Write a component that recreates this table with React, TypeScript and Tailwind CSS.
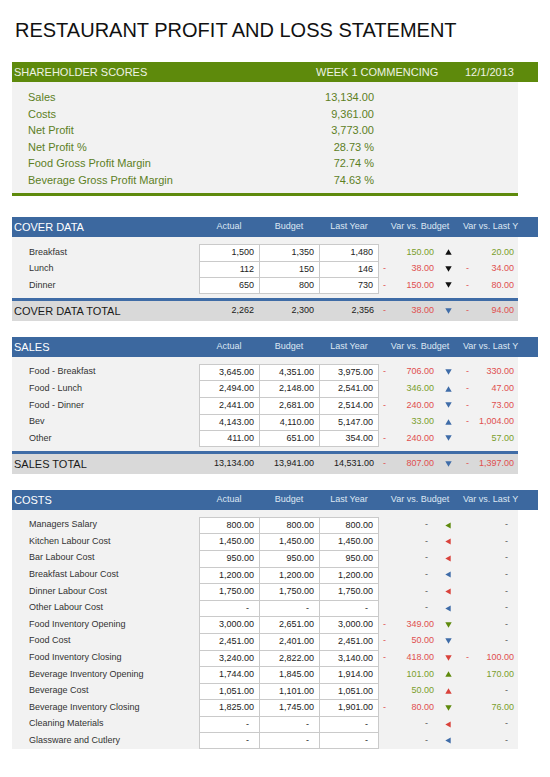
import React from "react";

type Tone = "k" | "b" | "r" | "g";
type Dir = "up" | "down" | "left";
type Row = [string, string, string, string, string, Dir, Tone, string];

const ARROW_TONE: Record<Tone, string> = {
  k: "text-[#111111]",
  b: "text-[#3f6ca8]",
  r: "text-[#d9423b]",
  g: "text-[#5e8a0c]",
};

const COVER: Row[] = [
  ["Breakfast", "1,500", "1,350", "1,480", "150.00", "up", "k", "20.00"],
  ["Lunch", "112", "150", "146", "-38.00", "down", "k", "-34.00"],
  ["Dinner", "650", "800", "730", "-150.00", "down", "k", "-80.00"],
];
const COVER_TOTAL: Row = ["COVER DATA TOTAL", "2,262", "2,300", "2,356", "-38.00", "down", "b", "-94.00"];

const SALES: Row[] = [
  ["Food - Breakfast", "3,645.00", "4,351.00", "3,975.00", "-706.00", "down", "b", "-330.00"],
  ["Food - Lunch", "2,494.00", "2,148.00", "2,541.00", "346.00", "up", "b", "-47.00"],
  ["Food - Dinner", "2,441.00", "2,681.00", "2,514.00", "-240.00", "down", "b", "-73.00"],
  ["Bev", "4,143.00", "4,110.00", "5,147.00", "33.00", "up", "b", "-1,004.00"],
  ["Other", "411.00", "651.00", "354.00", "-240.00", "down", "b", "57.00"],
];
const SALES_TOTAL: Row = ["SALES TOTAL", "13,134.00", "13,941.00", "14,531.00", "-807.00", "down", "b", "-1,397.00"];

const COSTS: Row[] = [
  ["Managers Salary", "800.00", "800.00", "800.00", "0", "left", "g", "0"],
  ["Kitchen Labour Cost", "1,450.00", "1,450.00", "1,450.00", "0", "left", "r", "0"],
  ["Bar Labour Cost", "950.00", "950.00", "950.00", "0", "left", "r", "0"],
  ["Breakfast Labour Cost", "1,200.00", "1,200.00", "1,200.00", "0", "left", "b", "0"],
  ["Dinner Labour Cost", "1,750.00", "1,750.00", "1,750.00", "0", "left", "r", "0"],
  ["Other Labour Cost", "-", "-", "-", "0", "left", "b", "0"],
  ["Food Inventory Opening", "3,000.00", "2,651.00", "3,000.00", "-349.00", "down", "g", "0"],
  ["Food Cost", "2,451.00", "2,401.00", "2,451.00", "-50.00", "down", "b", "0"],
  ["Food Inventory Closing", "3,240.00", "2,822.00", "3,140.00", "-418.00", "down", "r", "-100.00"],
  ["Beverage Inventory Opening", "1,744.00", "1,845.00", "1,914.00", "101.00", "up", "g", "170.00"],
  ["Beverage Cost", "1,051.00", "1,101.00", "1,051.00", "50.00", "up", "r", "0"],
  ["Beverage Inventory Closing", "1,825.00", "1,745.00", "1,901.00", "-80.00", "down", "g", "76.00"],
  ["Cleaning Materials", "-", "-", "-", "0", "left", "r", "0"],
  ["Glassware and Cutlery", "-", "-", "-", "0", "left", "b", "0"],
];

const SCORES = [
  ["Sales", "13,134.00"],
  ["Costs", "9,361.00"],
  ["Net Profit", "3,773.00"],
  ["Net Profit %", "28.73 %"],
  ["Food Gross Profit Margin", "72.74 %"],
  ["Beverage Gross Profit Margin", "74.63 %"],
];

function Arrow({ dir, tone }: { dir: Dir; tone: Tone }) {
  if (dir === "left") {
    return (
      <svg width="6" height="7" viewBox="0 0 6 7" className={ARROW_TONE[tone]}>
        <path d="M0.3 3.5 L5.7 0.4 L5.7 6.6 Z" fill="currentColor" />
      </svg>
    );
  }
  return (
    <svg width="7" height="6" viewBox="0 0 7 6" className={ARROW_TONE[tone]}>
      {dir === "up" ? (
        <path d="M3.5 0.3 L6.7 5.7 L0.3 5.7 Z" fill="currentColor" />
      ) : (
        <path d="M0.3 0.3 L6.7 0.3 L3.5 5.7 Z" fill="currentColor" />
      )}
    </svg>
  );
}

// dash + value pair used by both variance columns
function Variance({ value, width }: { value: string; width: string }) {
  const zero = value === "0";
  const neg = value.startsWith("-");
  return (
    <>
      <span className="w-[10px] pl-[4px] text-[#e04f4f]">{neg ? "-" : ""}</span>
      {zero ? (
        <span className={`${width} text-right pr-[6px] text-[#555555]`}>-</span>
      ) : (
        <span className={`${width} text-right ${neg ? "text-[#e04f4f]" : "text-[#7a9e2c]"}`}>
          {neg ? value.slice(1) : value}
        </span>
      )}
    </>
  );
}

function VarCols({ row }: { row: Row }) {
  return (
    <div className="flex items-center">
      <Variance value={row[4]} width="w-[45px]" />
      <span className="w-[28px] flex justify-center">
        <Arrow dir={row[5]} tone={row[6]} />
      </span>
      <Variance value={row[7]} width="w-[42px]" />
    </div>
  );
}

function DataRow({ row, last }: { row: Row; last: boolean }) {
  const cell = `w-[60px] bg-white border-l border-t border-[#cacaca] flex items-center justify-end ${
    last ? "border-b" : ""
  }`;
  const pad = (v: string) => (v === "-" ? "pr-[10px]" : "pr-[5px]");
  return (
    <div className="flex h-[16.6px] text-[9px] text-[#222222]">
      <div className="w-[187px] pl-[17px] flex items-center text-[#333333]">{row[0]}</div>
      <div className={`${cell} ${pad(row[1])}`}>{row[1]}</div>
      <div className={`${cell} ${pad(row[2])}`}>{row[2]}</div>
      <div className={`${cell} ${pad(row[3])} border-r`}>{row[3]}</div>
      <VarCols row={row} />
    </div>
  );
}

function Section({ title, rows, total, spaced }: { title: string; rows: Row[]; total?: Row; spaced: string }) {
  return (
    <div className={spaced}>
      <div className="w-[526px] h-[20px] bg-[#3c689f] flex items-center text-[#dde7f3] text-[9px]">
        <div className="w-[187px] pl-[2px] text-[11px] text-white">{title}</div>
        <div className="w-[60px] text-center">Actual</div>
        <div className="w-[60px] text-center">Budget</div>
        <div className="w-[60px] text-center">Last Year</div>
        <div className="w-[82px] text-center">Var vs. Budget</div>
        <div className="ml-[2px] whitespace-nowrap">Var vs. Last Y</div>
      </div>
      <div className={`w-[506px] bg-[#f2f2f2] pt-[7px] ${total ? "pb-[4px]" : ""}`}>
        {rows.map((r, i) => (
          <DataRow key={r[0]} row={r} last={i === rows.length - 1} />
        ))}
      </div>
      {total && (
        <>
          <div className="w-[506px] h-[3px] bg-[#3f6ca6]" />
          <div className="w-[506px] h-[20px] bg-[#d9d9d9] flex items-center text-[9px] text-[#1a1a1a]">
            <div className="w-[187px] pl-[2px] text-[11px]">{total[0]}</div>
            <div className="w-[60px] text-right pr-[5px]">{total[1]}</div>
            <div className="w-[60px] text-right pr-[5px]">{total[2]}</div>
            <div className="w-[60px] text-right pr-[5px]">{total[3]}</div>
            <VarCols row={total} />
          </div>
        </>
      )}
    </div>
  );
}

export default function App() {
  return (
    <div className="w-[550px] h-[777px] overflow-hidden bg-white pl-[12px] font-['Liberation_Sans',Arial,sans-serif]">
      <h1 className="mt-[18px] pl-[3px] text-[20px] leading-[24px] text-[#111111]">
        RESTAURANT PROFIT AND LOSS STATEMENT
      </h1>

      <div className="mt-[20px] w-[526px] h-[20px] bg-[#5e8a0c] flex items-center text-[11px] text-[#eef3e4]">
        <div className="w-[304px] pl-[2px]">SHAREHOLDER SCORES</div>
        <div className="w-[149px]">WEEK 1 COMMENCING</div>
        <div>12/1/2013</div>
      </div>
      <div className="w-[506px] h-[111px] bg-[#f2f2f2] pt-[7px]">
        {SCORES.map(([label, value]) => (
          <div key={label} className="flex h-[16.6px] items-center text-[11px] text-[#5d801f]">
            <div className="w-[250px] pl-[16px]">{label}</div>
            <div className="w-[112px] text-right">{value}</div>
          </div>
        ))}
      </div>
      <div className="w-[506px] h-[3px] bg-[#5e8a0c]" />

      <Section title="COVER DATA" rows={COVER} total={COVER_TOTAL} spaced="mt-[21px]" />
      <Section title="SALES" rows={SALES} total={SALES_TOTAL} spaced="mt-[16px]" />
      <Section title="COSTS" rows={COSTS} spaced="mt-[16px]" />
    </div>
  );
}
